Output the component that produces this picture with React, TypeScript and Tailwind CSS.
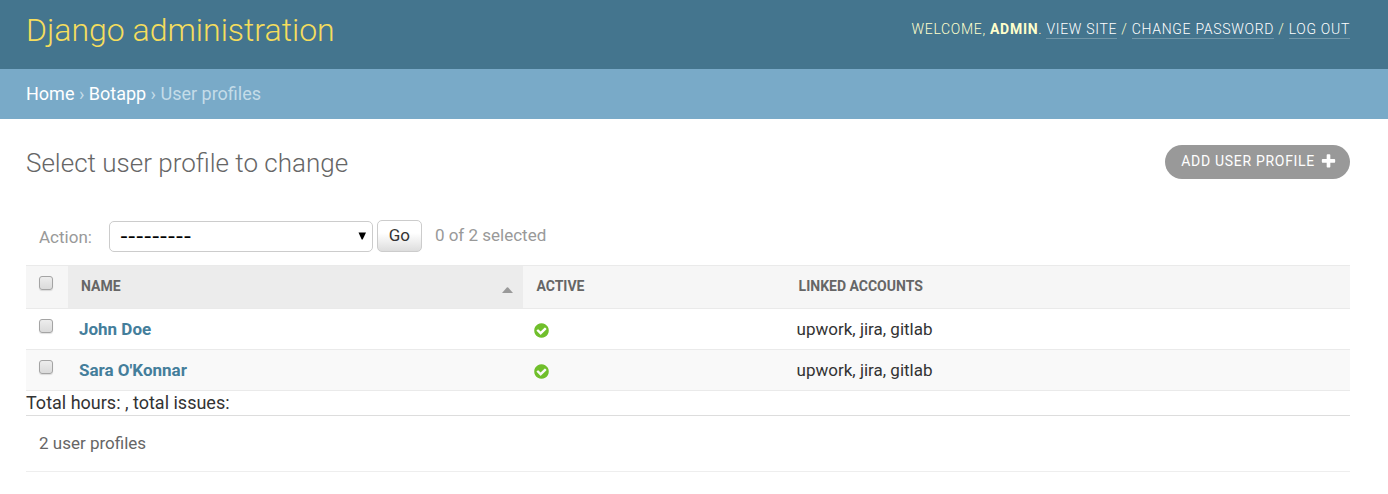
import { useState } from 'react';

type Profile = { id: number; name: string; accounts: string };

const profiles: Profile[] = [
  { id: 1, name: 'John Doe', accounts: 'upwork, jira, gitlab' },
  { id: 2, name: "Sara O'Konnar", accounts: 'upwork, jira, gitlab' },
];

function Checkbox({ label, checked, onChange }: { label: string; checked: boolean; onChange: () => void }) {
  return (
    <input
      type="checkbox"
      aria-label={label}
      checked={checked}
      onChange={onChange}
      className="block size-[14px] appearance-none rounded-[3px] border border-[#a4a4a4] bg-linear-to-b from-[#ededed] to-[#dadada] shadow-[0_1px_1px_rgba(0,0,0,0.12)] checked:bg-[#44758e] checked:bg-none"
    />
  );
}

function CheckIcon() {
  return (
    <svg viewBox="0 0 1792 1792" className="block size-[17px]" role="img" aria-label="True">
      <path
        fill="#70bf2b"
        d="M1412 734q0-28-18-46l-91-90q-19-19-45-19t-45 19l-408 407-226-226q-19-19-45-19t-45 19l-91 90q-18 18-18 46 0 27 18 45l362 362q19 19 45 19 27 0 46-19l543-543q18-18 18-45zm252 162q0 209-103 385.500t-279.500 279.500-385.500 103-385.500-103-279.500-279.500-103-385.500 103-385.500 279.500-279.500 385.500-103 385.500 103 279.500 279.500 103 385.500z"
      />
    </svg>
  );
}

function PlusIcon() {
  return (
    <svg viewBox="0 0 1792 1792" className="size-[17px]" aria-hidden="true">
      <path
        fill="#fff"
        d="M1600 736v192q0 40-28 68t-68 28h-416v416q0 40-28 68t-68 28h-192q-40 0-68-28t-28-68v-416h-416q-40 0-68-28t-28-68v-192q0-40 28-68t68-28h416v-416q0-40 28-68t68-28h192q40 0 68 28t28 68v416h416q40 0 68 28t28 68z"
      />
    </svg>
  );
}

export default function App() {
  const [selected, setSelected] = useState<number[]>([]);
  const toggle = (id: number) =>
    setSelected((s) => (s.includes(id) ? s.filter((x) => x !== id) : [...s, id]));
  const all = selected.length === profiles.length;
  const toolLink = 'border-b border-[#7196a8] pb-[1px] text-white';

  return (
    <div className="bg-white font-['Roboto',sans-serif] text-[17px] text-[#333]">
      <header className="flex items-start justify-between bg-[#44758e] pt-[10px] pr-[38px] pb-[19px] pl-[26px]">
        <h1 className="text-[32px] leading-[40px] font-light text-[#f5dd5d]">
          <a href="#">Django administration</a>
        </h1>
        <div className="pt-[10px] text-[14px] leading-[18px] font-light tracking-wider text-[#ffc] uppercase">
          Welcome, <strong className="font-bold">admin</strong>.{' '}
          <a href="#" className={toolLink}>View site</a> /{' '}
          <a href="#" className={toolLink}>Change password</a> /{' '}
          <a href="#" className={toolLink}>Log out</a>
        </div>
      </header>

      <nav aria-label="Breadcrumbs" className="bg-[#79aac8] px-[26px] py-[13px] text-[18px] leading-[24px] text-[#c4dce8]">
        <a href="#" className="text-white">Home</a> › <a href="#" className="text-white">Botapp</a> › User profiles
      </nav>

      <main className="pt-[26px] pr-[38px] pl-[26px]">
        <div className="flex items-start justify-between">
          <h2 className="text-[26px] leading-[36px] font-light text-[#666]">Select user profile to change</h2>
          <a
            href="#"
            className="flex h-[34px] items-center gap-[5px] rounded-full bg-[#999] pr-[13px] pb-[1px] pl-[16px] text-[14px] tracking-wider text-white uppercase"
          >
            Add user profile
            <PlusIcon />
          </a>
        </div>

        <form className="mt-[39px] flex h-[32px] items-center px-[13px] text-[#999]" onSubmit={(e) => e.preventDefault()}>
          <label htmlFor="action" className="mr-[17px] pt-[3px]">Action:</label>
          <div className="relative mr-[4px]">
            <select
              id="action"
              className="block h-[31px] w-[264px] appearance-none rounded-[5px] border border-[#ccc] bg-white px-[10px] font-['DejaVu_Sans',sans-serif] text-[22px] leading-[24px] text-black"
            >
              <option>---------</option>
            </select>
            <svg viewBox="0 0 8 8" className="pointer-events-none absolute top-[11px] right-[7px] size-[8px]" aria-hidden="true">
              <path d="M0.500 0.500H8L4.700 7.500H3.700Z" fill="#000" />
            </svg>
          </div>
          <button
            type="submit"
            className="h-[32px] w-[45px] rounded-[5px] border border-[#ccc] bg-linear-to-b from-white from-40% to-[#ddd] text-[#333]"
          >
            Go
          </button>
          <span className="ml-[13px]">{selected.length} of {profiles.length} selected</span>
        </form>

        <table className="mt-[13px] w-full table-fixed border-collapse text-left">
          <colgroup>
            <col className="w-[42px]" />
            <col className="w-[34.4%]" />
            <col className="w-[19.8%]" />
            <col />
          </colgroup>
          <thead className="border-y border-[#eaeaea] bg-[#f6f6f6] text-[14px] text-[#666] uppercase">
            <tr className="h-[43px]">
              <th className="px-[13px] pb-[8px]">
                <Checkbox label="Select all" checked={all} onChange={() => setSelected(all ? [] : profiles.map((p) => p.id))} />
              </th>
              <th className="bg-[#ececec] px-[13px] pb-[2px]">
                <div className="flex items-center justify-between">
                  <a href="#">Name</a>
                  <svg viewBox="0 0 11 6" className="-mr-[3px] mt-[8px] h-[6px] w-[11px]" aria-hidden="true">
                    <path d="M0 6L4.800 0.500Q5.500 0 6.200 0.500L11 6Z" fill="#999" />
                  </svg>
                </div>
              </th>
              <th className="px-[13px] pb-[2px]">Active</th>
              <th className="px-[13px] pb-[2px]">Linked accounts</th>
            </tr>
          </thead>
          <tbody>
            {profiles.map((p) => (
              <tr key={p.id} className="h-[41px] border-b border-[#eaeaea] even:bg-[#f9f9f9]">
                <td className="px-[13px] pb-[6px]">
                  <Checkbox label={`Select ${p.name}`} checked={selected.includes(p.id)} onChange={() => toggle(p.id)} />
                </td>
                <th scope="row" className="px-[11px] pt-[2px] font-bold text-[#447e9b]">
                  <a href="#">{p.name}</a>
                </th>
                <td className="px-[10px] pt-[2px]"><CheckIcon /></td>
                <td className="px-[11px] pt-[2px]">{p.accounts}</td>
              </tr>
            ))}
          </tbody>
        </table>

        <div className="text-[18px] leading-[24px]">Total hours: , total issues:</div>
        <p className="border-t border-b border-t-[#ddd] border-b-[#eee] px-[13px] py-[15px] leading-[25px] text-[#666]">
          2 user profiles
        </p>
      </main>
    </div>
  );
}
